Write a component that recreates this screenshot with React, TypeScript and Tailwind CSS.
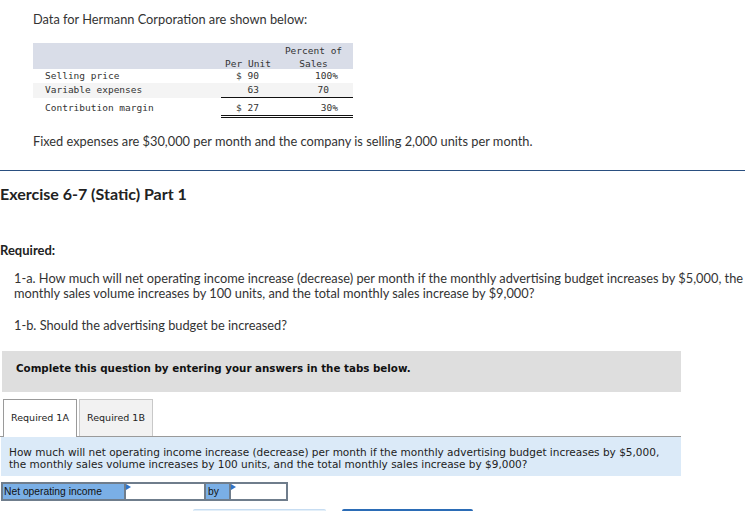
import React from "react";

export default function App() {
  return (
    <div className="relative h-[511px] w-[745px] overflow-hidden bg-white font-['Lato',sans-serif] text-[#333]">
      <p className="pl-[33px] pt-[11px] text-[12.8px] leading-[16px]">Data for Hermann Corporation are shown below:</p>

      {/* data table */}
      <div className="ml-[33px] mt-[16px] w-[320px] font-['DejaVu_Sans_Mono',monospace] text-[9.5px] text-[#333]">
        <div className="grid h-[26px] grid-cols-[188px_59px_73px] bg-[#d9dde8] pt-[1px] leading-[13px]">
          <div />
          <div className="flex flex-col items-center pr-[5px]">
            <span>&nbsp;</span>
            <span>Per Unit</span>
          </div>
          <div className="flex flex-col items-center pr-[6px]">
            <span>Percent of</span>
            <span>Sales</span>
          </div>
        </div>
        <div className="grid h-[14px] grid-cols-[188px_59px_73px] leading-[14px]">
          <div className="pl-[12px]">Selling price</div>
          <div className="whitespace-pre pr-[21px] text-right">$ 90</div>
          <div className="pr-[15px] text-right">100%</div>
        </div>
        <div className="grid grid-cols-[188px_59px_73px] bg-[#f4f4f4] leading-[14px]">
          <div className="pl-[12px]">Variable expenses</div>
          <div className="border-b border-[#111] pr-[21px] text-right">63</div>
          <div className="border-b border-[#111] pr-[24px] text-right">70</div>
        </div>
        <div className="grid grid-cols-[188px_59px_73px] leading-[14px]">
          <div className="pl-[12px] pt-[3px]">Contribution margin</div>
          <div className="whitespace-pre border-b-[3px] border-double border-[#111] pr-[21px] pt-[3px] text-right">$ 27</div>
          <div className="border-b-[3px] border-double border-[#111] pr-[15px] pt-[3px] text-right">30%</div>
        </div>
      </div>

      <p className="mt-[15px] pl-[33px] text-[12.8px] leading-[16px]">
        Fixed expenses are $30,000 per month and the company is selling 2,000 units per month.
      </p>

      <div className="mt-[21px] h-px w-full bg-[#2a4f80]" />

      <h2 className="mt-[13px] text-[16px] font-bold leading-[20px] text-[#222]">Exercise 6-7 (Static) Part 1</h2>

      <p className="mt-[38px] text-[13px] font-bold leading-[16px] text-[#222]">Required:</p>

      <p className="mt-[13px] whitespace-nowrap pl-[14px] text-[12.8px] leading-[15px]">
        1-a. How much will net operating income increase (decrease) per month if the monthly advertising budget increases by $5,000, the
        <br />
        monthly sales volume increases by 100 units, and the total monthly sales increase by $9,000?
      </p>

      <p className="mt-[17px] pl-[14px] text-[12.8px] leading-[15px]">1-b. Should the advertising budget be increased?</p>

      {/* instructions box */}
      <div className="ml-[2px] mt-[18px] h-[41px] w-[679px] bg-[#dedede] pl-[14px] pt-[11px] font-['DejaVu_Sans',sans-serif] text-[10.3px] font-bold leading-[12px] text-[#111]">
        Complete this question by entering your answers in the tabs below.
      </div>

      {/* tabs */}
      <div className="mt-[7px] flex h-[38px] w-[681px] items-end border-b border-[#9a9a9a] font-['DejaVu_Sans',sans-serif] text-[9.5px] text-[#222]">
        <div className="relative z-10 -mb-px ml-[3px] flex h-[38px] w-[74px] items-center justify-center border border-b-0 border-[#9a9a9a] bg-white">
          Required 1A
        </div>
        <div className="ml-[2px] flex h-[37px] w-[74px] items-center justify-center border border-b-0 border-[#c8c8c8] bg-[#f2f2f2]">
          Required 1B
        </div>
      </div>

      {/* question */}
      <div className="ml-px h-[39px] w-[680px] whitespace-nowrap bg-[#dbeaf8] pl-[8px] pt-[9px] font-['DejaVu_Sans',sans-serif] text-[10.5px] leading-[12px] text-[#222]">
        How much will net operating income increase (decrease) per month if the monthly advertising budget increases by $5,000,
        <br />
        the monthly sales volume increases by 100 units, and the total monthly sales increase by $9,000?
      </div>

      {/* answer row */}
      <div className="ml-px mt-[6px] flex h-[19px] w-[287px] border-2 border-[#6f7d8c] font-['Liberation_Sans',sans-serif] text-[10.3px] leading-[15px] text-[#111]">
        <div className="w-[121px] bg-[#7aafe6] pl-px">Net operating income</div>
        <div className="relative w-[80px] border-l-2 border-[#6f7d8c] bg-white">
          <svg className="absolute left-0 top-0" width="5" height="6" viewBox="0 0 5 6">
            <path d="M0 0 L5 3 L0 6 Z" fill="#2f74c8" />
          </svg>
        </div>
        <div className="w-[25px] border-l-2 border-[#6f7d8c] bg-[#7aafe6] pl-[2px]">by</div>
        <div className="relative w-[57px] border-l-2 border-[#6f7d8c] bg-white">
          <svg className="absolute left-0 top-0" width="5" height="6" viewBox="0 0 5 6">
            <path d="M0 0 L5 3 L0 6 Z" fill="#2f74c8" />
          </svg>
        </div>
      </div>

      {/* navigation buttons (cut off) */}
      <div className="mt-[8px] flex">
        <div className="ml-[193px] h-[20px] w-[133px] rounded-t-[2px] border-t border-[#c7ddf2] bg-[#e3eff9]" />
        <div className="ml-[16px] h-[20px] w-[131px] rounded-t-[2px] bg-[#2b6cb6]" />
      </div>
    </div>
  );
}
